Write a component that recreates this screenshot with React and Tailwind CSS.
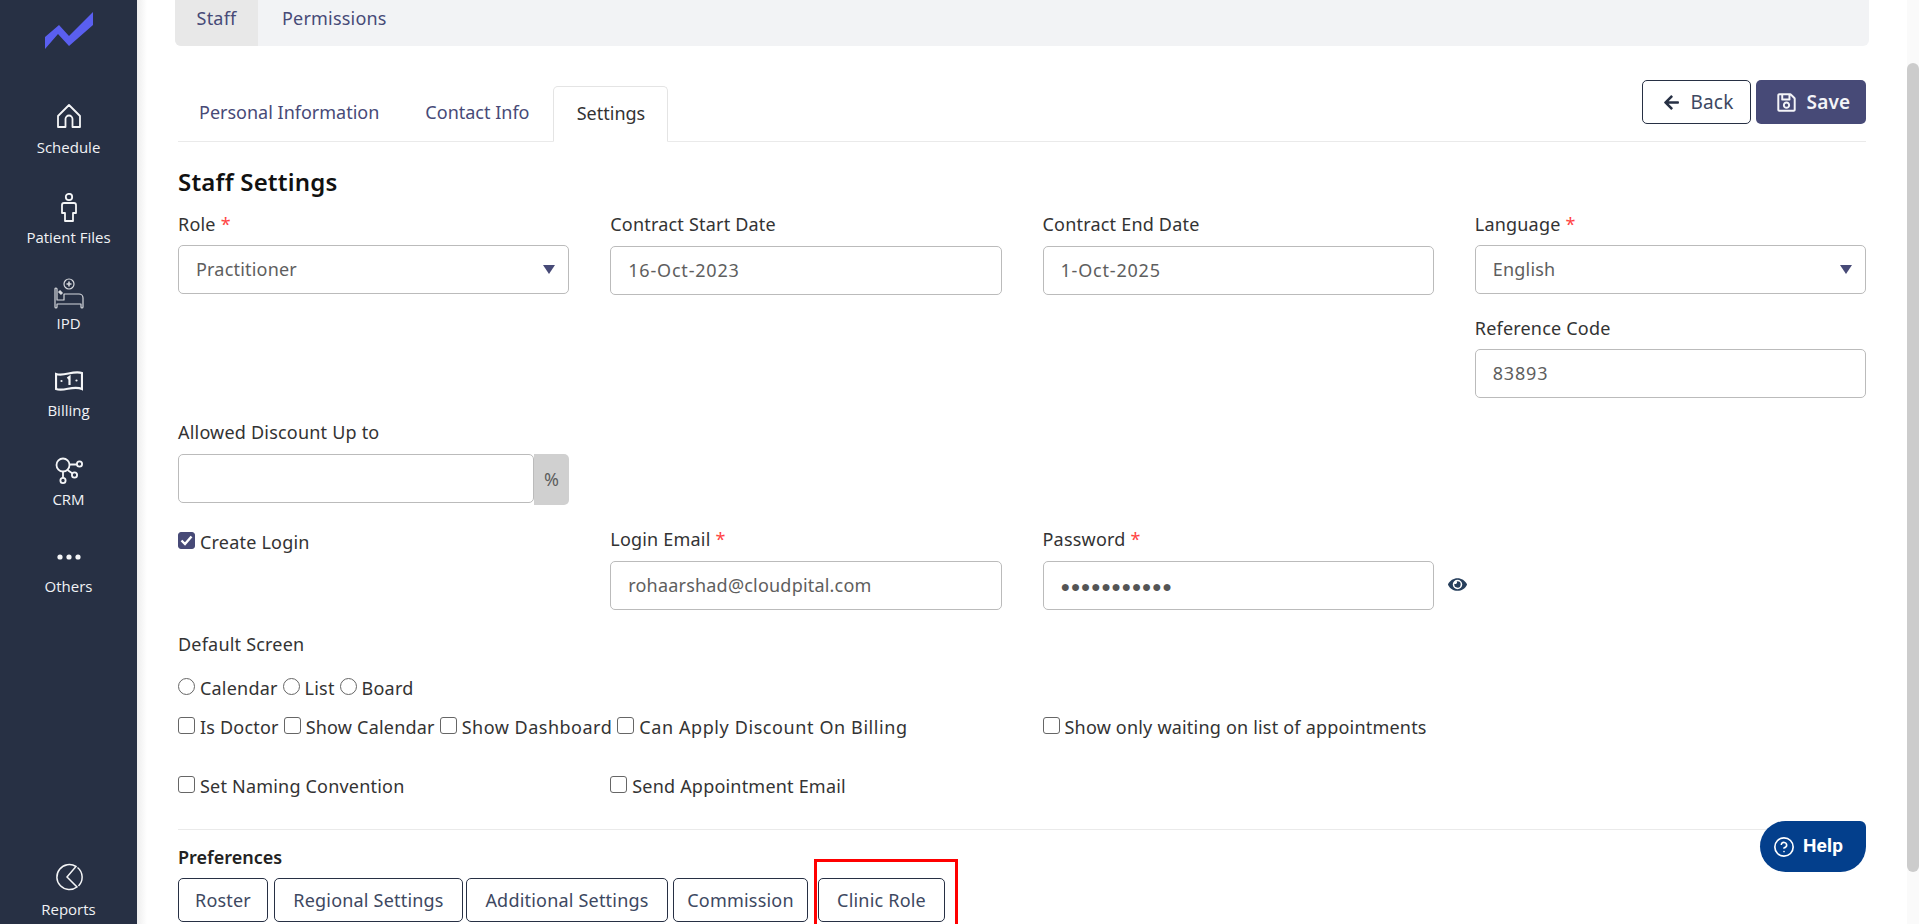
import { FaArrowLeft, FaRegSave, FaEye } from 'react-icons/fa';
import { CircleHelp } from 'lucide-react';

const navFont = "font-['Open_Sans','Noto_Sans',sans-serif]";

function NavItem({ label, icon, className, gap = 'mt-[1px]' }) {
  return (
    <div className={`flex flex-col items-center ${className}`}>
      <div className="h-[36px] flex items-center justify-center">{icon}</div>
      <span className={`${gap} text-[15px] leading-[20px] tracking-normal text-[#f1f2f5] ${navFont}`}>{label}</span>
    </div>
  );
}

function Sidebar() {
  return (
    <div className="w-[137px] shrink-0 h-full bg-[#273044] flex flex-col">
      <div className="h-[98px] pt-[12px] pl-[45px]">
        <svg width="48" height="37" viewBox="0 0 48 37"><polygon points="0,25 14,13 24,24 48,0 48,13 24,34 13,22 0,37" fill="#5a5ff0" /></svg>
      </div>
      <NavItem gap="mt-[3px]" label="Schedule" icon={
        <svg width="26" height="26" viewBox="0 0 26 26" fill="none" stroke="#f4f5f7" strokeWidth="1.8" strokeLinejoin="round"><path d="M13 2 L2 13 V24 H9.5 V16 a3.5 3.5 0 0 1 7 0 V24 H24 V13 Z" /></svg>
      } />
      <NavItem className="mt-[33px]" label="Patient Files" icon={
        <svg width="16" height="30" viewBox="0 0 16 30" fill="none" stroke="#f4f5f7" strokeWidth="1.8"><circle cx="8" cy="4" r="3.2" /><path d="M3 10 H13 a2 2 0 0 1 2 2 V20 H12 V28 H4 V20 H1 V12 a2 2 0 0 1 2-2 Z" strokeLinejoin="round" /></svg>
      } />
      <NavItem className="mt-[29px]" label="IPD" icon={
        <svg width="32" height="32" viewBox="0 0 32 32" fill="none" stroke="#d6d8dd" strokeWidth="1.2"><circle cx="16" cy="6" r="5" /><path d="M16 3.5 V8.5 M13.5 6 H18.5" strokeWidth="1.6" /><path d="M2 11 V29 a1 1 0 0 0 2 0 V26 H28 V29 a1 1 0 0 0 2 0 V20 a4 4 0 0 0-4-4 H11 V22 H4 V11 a1 1 0 0 0-2 0 Z" strokeLinejoin="round" /><path d="M6 13 L9 16" strokeWidth="3" /></svg>
      } />
      <NavItem className="mt-[30px]" label="Billing" icon={
        <svg width="28" height="20" viewBox="0 0 28 20" fill="none" stroke="#f4f5f7" strokeWidth="2.2"><path d="M1 3 C9 6 18 -1 27 2 V18 C18 14 9 21 1 18 Z" /><circle cx="6.5" cy="10" r="1.1" fill="#f4f5f7" stroke="none" /><circle cx="21.5" cy="9.5" r="1.1" fill="#f4f5f7" stroke="none" /><path d="M12.5 7.5 L14.5 6 V14" strokeWidth="2.2" /></svg>
      } />
      <NavItem className="mt-[32px]" label="CRM" icon={
        <svg width="28" height="27" viewBox="0 0 28 27" fill="none" stroke="#f4f5f7" strokeWidth="1.8"><circle cx="8" cy="8" r="6.5" /><circle cx="24.5" cy="7" r="2.6" /><circle cx="19.5" cy="18" r="2.6" /><circle cx="8" cy="23.5" r="2.6" /><path d="M14.5 7.5 H22 M12.5 13 L17.5 16.5 M8 14.5 V21" /></svg>
      } />
      <NavItem className="mt-[30px]" label="Others" icon={
        <svg width="24" height="6" viewBox="0 0 24 6" fill="#f4f5f7"><circle cx="3" cy="3" r="2.6" /><circle cx="12" cy="3" r="2.6" /><circle cx="21" cy="3" r="2.6" /></svg>
      } />
      <NavItem className="mt-auto mb-[5px]" gap="mt-[4px]" label="Reports" icon={
        <svg width="28" height="28" viewBox="0 0 28 28" fill="none" stroke="#f4f5f7" strokeWidth="1.5"><path d="M21 3.5 A12.5 12.5 0 1 0 22 24 L12 14 Z" /><path d="M22.5 4.5 A12.5 12.5 0 0 1 23.5 23" /></svg>
      } />
    </div>
  );
}

function Label({ children, required }) {
  return (
    <div className="h-[24px] leading-[24px] text-[18px] text-[#333]">
      {children}
      {required && <span className="text-[#f44] ml-[5px]">*</span>}
    </div>
  );
}

function TextBox({ value, mono, className = '', textClass = '' }) {
  return (
    <div className={`h-[49px] border border-[#bbb] rounded-[5px] px-[17px] flex items-center text-[18px] text-[#5e5e5e] bg-white ${className}`}>
      {mono ? <span className="tracking-[0.5px] text-[#555] text-[16px]">{value}</span> : <span className={textClass}>{value}</span>}
    </div>
  );
}

function SelectBox({ value }) {
  return (
    <div className="h-[49px] border border-[#bbb] rounded-[5px] pl-[17px] pr-[13px] flex items-center justify-between text-[18px] text-[#5e5e5e]">
      {value}
      <svg width="12" height="9" viewBox="0 0 12 9"><polygon points="0,0 12,0 6,9" fill="#474a77" /></svg>
    </div>
  );
}

function Check({ label, checked, round, textClass = '' }) {
  return (
    <label className="flex items-center gap-[5px] h-[24px] text-[18px] leading-[24px] text-[#333] whitespace-nowrap">
      <span className={`w-[17px] h-[17px] shrink-0 -mt-[4px] flex items-center justify-center border ${round ? 'rounded-full' : 'rounded-[3px]'} ${checked ? 'bg-[#474a77] border-[#474a77]' : 'border-[#666] bg-white'}`}>
        {checked && <svg width="13" height="11" viewBox="0 0 13 11" fill="none" stroke="#fff" strokeWidth="2.4"><path d="M1.5 5.5 L5 9 L11.5 1.5" /></svg>}
      </span>
      <span className={textClass}>{label}</span>
    </label>
  );
}

function PrefButton({ children, className = '' }) {
  return (
    <button className={`relative h-[44px] border border-[#273044] rounded-[5px] text-[18px] text-[#3d4861] whitespace-nowrap ${className}`}>
      {children}
    </button>
  );
}

export default function App() {
  return (
    <div className="relative flex w-full h-[924px] overflow-hidden bg-white tracking-[0.2px] font-['Noto_Sans',sans-serif]">
      <Sidebar />
      <div className="relative flex-1 min-w-0 h-full overflow-hidden">
        <div className="absolute left-0 top-0 bottom-0 w-[10px] bg-gradient-to-r from-[#eeeeee] to-white" />
        {/* top tab bar */}
        <div className="relative ml-[38px] mr-[38px] h-[46px] bg-[#f2f3f5] rounded-b-[6px] flex overflow-hidden text-[18px]">
          <div className="w-[83px] bg-[#e8e8e8] text-[#474a77] flex items-center justify-center pb-[10px]">Staff</div>
          <div className="ml-[24px] text-[#474a77] flex items-center pb-[9px]">Permissions</div>
        </div>

        <div className="relative ml-[41px] w-[1688px]">
          {/* sub tabs + actions */}
          <div className="mt-[40px] h-[56px] border-b border-[#eaeaea] flex justify-between">
            <div className="flex text-[18px] tracking-normal text-[#474a77] pl-[21px]">
              <div className="pt-[12px] leading-[28px]">Personal Information</div>
              <div className="pt-[12px] leading-[28px] ml-[46px]">Contact Info</div>
              <div className="ml-[24px] -mb-px w-[115px] h-[56px] bg-white border border-[#e4e4e4] border-b-white rounded-t-[5px] pt-[12px] leading-[28px] text-center text-[#333]">Settings</div>
            </div>
            <div className="flex gap-[5px] -mt-[6px] h-[44px]">
              <button className="w-[109px] h-[44px] pl-[4px] border border-[#273044] rounded-[5px] flex items-center justify-center gap-[10px] text-[19px] text-[#3d4861]">
                <FaArrowLeft className="text-[17px] text-[#273044]" /> Back
              </button>
              <button className="w-[110px] h-[44px] pl-[4px] bg-[#474a77] rounded-[5px] flex items-center justify-center gap-[10px] text-[19px] font-semibold text-[#f4f4f8]">
                <FaRegSave className="text-[21px]" /> Save
              </button>
            </div>
          </div>

          <div className="mt-[24px] h-[32px] leading-[32px] text-[24px] font-semibold text-[#111]">Staff Settings</div>

          <div className="mt-[14px] grid grid-cols-4 gap-x-[41px]">
            <div>
              <Label required>Role</Label>
              <div className="mt-[9px]"><SelectBox value="Practitioner" /></div>
            </div>
            <div>
              <Label>Contract Start Date</Label>
              <TextBox value="16-Oct-2023" textClass="tracking-[0.8px]" className="mt-[10px]" />
            </div>
            <div>
              <Label>Contract End Date</Label>
              <TextBox value="1-Oct-2025" textClass="tracking-[0.8px]" className="mt-[10px]" />
            </div>
            <div>
              <Label required>Language</Label>
              <div className="mt-[9px]"><SelectBox value="English" /></div>
              <div className="mt-[22px]"><Label>Reference Code</Label></div>
              <TextBox value="83893" textClass="tracking-[0.8px]" className="mt-[9px]" />
            </div>
          </div>

          <div className="mt-[22px] w-[391px]">
            <Label>Allowed Discount Up to</Label>
            <div className="mt-[10px] flex items-start">
              <div className="flex-1 h-[49px] border border-[#bbb] rounded-[5px]" />
              <div className="w-[35px] h-[51px] bg-[#d0d0d0] rounded-r-[5px] flex items-center justify-center text-[18px] text-[#5e5e5e]">%</div>
            </div>
          </div>

          <div className="mt-[22px] grid grid-cols-4 gap-x-[41px]">
            <div className="pt-[3px]"><Check label="Create Login" checked /></div>
            <div>
              <Label required>Login Email</Label>
              <TextBox value="rohaarshad@cloudpital.com" className="mt-[10px]" />
            </div>
            <div className="relative">
              <Label required>Password</Label>
              <TextBox value="●●●●●●●●●●●" mono className="mt-[10px]" />
              <FaEye className="absolute right-[-33px] top-[48px] text-[19px] text-[#273f5c]" />
            </div>
          </div>

          <div className="mt-[22px]"><Label>Default Screen</Label></div>
          <div className="mt-[20px] flex gap-[5px]">
            <Check round label="Calendar" />
            <Check round label="List" />
            <Check round label="Board" />
          </div>

          <div className="mt-[15px] grid grid-cols-4 gap-x-[41px]">
            <div className="col-span-2 flex gap-[5px]">
              <Check label="Is Doctor" />
              <Check label="Show Calendar" />
              <Check label="Show Dashboard" textClass="tracking-[0.5px]" />
              <Check label="Can Apply Discount On Billing" textClass="tracking-[0.6px]" />
            </div>
            <div className="col-span-2"><Check label="Show only waiting on list of appointments" /></div>
          </div>
          <div className="mt-[35px] grid grid-cols-4 gap-x-[41px]">
            <Check label="Set Naming Convention" />
            <Check label="Send Appointment Email" />
          </div>

          <div className="mt-[31px] border-t border-[#eaeaea]" />
          <div className="mt-[15px] h-[24px] leading-[24px] text-[18px] tracking-normal font-semibold text-[#222]">Preferences</div>
          <div className="mt-[9px] flex">
            <PrefButton className="w-[90px]">Roster</PrefButton>
            <PrefButton className="w-[189px] ml-[6px]">Regional Settings</PrefButton>
            <PrefButton className="w-[202px] ml-[3px]">Additional Settings</PrefButton>
            <PrefButton className="w-[135px] ml-[5px]">Commission</PrefButton>
            <PrefButton className="w-[127px] ml-[10px]">
              Clinic Role
              <span className="absolute left-[-5px] right-[-14px] top-[-20px] bottom-[-20px] border-[3px] border-[#f00]" />
            </PrefButton>
          </div>
        </div>
      </div>

      {/* scrollbar */}
      <div className="w-[12px] shrink-0 h-full bg-[#fafafa] pt-[63px]">
        <div className="h-[809px] bg-[#cccccc] rounded-[6px]" />
      </div>

      <div className="absolute right-[53px] bottom-[52px] w-[106px] h-[51px] bg-[#033f8c] rounded-l-[26px] rounded-br-[26px] rounded-tr-[6px] flex items-center pl-[13px] gap-[8px] text-white font-['Roboto',sans-serif] font-bold text-[19px]">
        <CircleHelp size={22} strokeWidth={1.8} /> Help
      </div>
    </div>
  );
}
